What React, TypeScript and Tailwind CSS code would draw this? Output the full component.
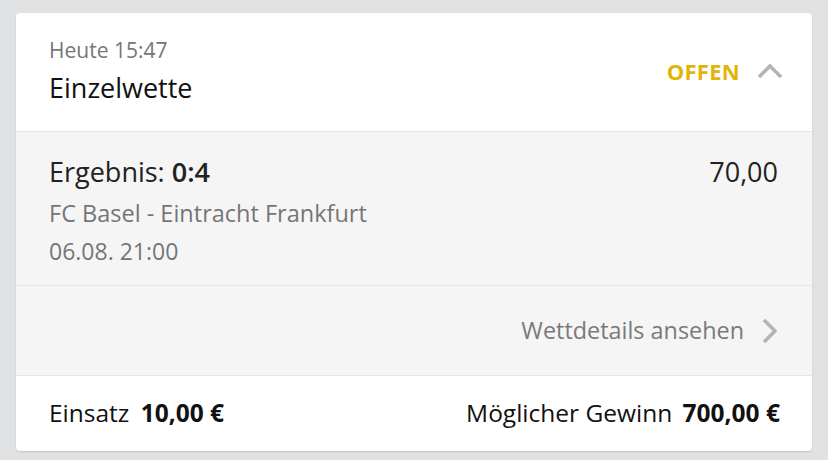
const font = { fontFamily: "'Open Sans', 'Noto Sans', sans-serif" };

function ChevronUp() {
  return (
    <svg width="26" height="16" viewBox="0 0 26 16" fill="none">
      <path d="M2 14 L13 3 L24 14" stroke="#b3b3b3" strokeWidth="3.5" />
    </svg>
  );
}

function ChevronRight() {
  return (
    <svg width="15" height="26" viewBox="0 0 15 26" fill="none">
      <path d="M2 2 L13 13 L2 24" stroke="#b3b3b3" strokeWidth="3.5" />
    </svg>
  );
}

export default function App() {
  return (
    <div className="h-[460px] w-[828px] bg-[#e1e2e4] px-4 pt-[13px]" style={font}>
      <div className="overflow-hidden rounded-[4px] bg-white shadow-[0_1px_2px_rgba(0,0,0,0.15)]">
        <div className="flex items-center justify-between border-b border-[#e6e6e6] pl-[33px] pr-[29px] pt-[24px] pb-[26px]">
          <div>
            <div className="text-[21px] leading-[26px] text-[#767676]">Heute 15:47</div>
            <div className="mt-[8px] text-[27px] leading-[34px] text-[#111]">Einzelwette</div>
          </div>
          <div className="flex items-center gap-[17px]">
            <span className="text-[22px] font-bold tracking-[0.3px] text-[#e2b406]">OFFEN</span>
            <ChevronUp />
          </div>
        </div>

        <div className="border-b border-[#e6e6e6] bg-[#f5f5f5] pl-[33px] pr-[34px] pt-[23px] pb-[19px]">
          <div className="flex justify-between text-[27px] leading-[34px] text-[#222]">
            <span>
              Ergebnis: <b className="font-semibold">0:4</b>
            </span>
            <span>70,00</span>
          </div>
          <div className="mt-[8px] text-[23.5px] leading-[32px] text-[#757575]">FC Basel - Eintracht Frankfurt</div>
          <div className="mt-[7px] text-[23px] leading-[30px] text-[#757575]">06.08. 21:00</div>
        </div>

        <div className="flex h-[90px] items-center justify-end gap-[18px] border-b border-[#e6e6e6] bg-[#f5f5f5] pr-[35px]">
          <span className="text-[23.4px] text-[#7a7a7a]">Wettdetails ansehen</span>
          <ChevronRight />
        </div>

        <div className="flex h-[75px] items-center justify-between pl-[33px] pr-[32px] text-[24.5px] text-[#111]">
          <span>
            Einsatz <b className="ml-[5px]">10,00 €</b>
          </span>
          <span>
            Möglicher Gewinn <b className="ml-[4px]">700,00 €</b>
          </span>
        </div>
      </div>
    </div>
  );
}
